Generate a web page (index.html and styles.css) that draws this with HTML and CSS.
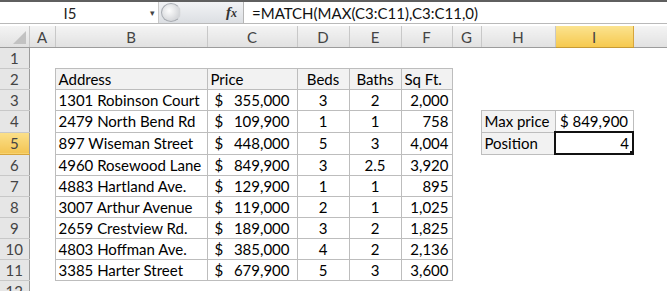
FILE: index.html
```html
<!DOCTYPE html>
<html lang="en">
<head>
    <meta charset="UTF-8">
    <title>MATCH max price</title>
    <link rel="stylesheet" href="styles.css">
</head>
<body>
    <div class="formula-bar">
        <div class="name-box">
            <span class="name">I5</span>
            <span class="drop">&#9662;</span>
        </div>
        <div class="splitter">
            <span class="knob"></span>
            <span class="fx"><i>f</i><i class="x">x</i></span>
        </div>
        <div class="formula">=MATCH(MAX(C3:C11),C3:C11,0)</div>
    </div>

    <table class="sheet">
        <colgroup>
            <col style="width:29px">
            <col style="width:26px">
            <col style="width:152px">
            <col style="width:90px">
            <col style="width:52px">
            <col style="width:52px">
            <col style="width:51px">
            <col style="width:29px">
            <col style="width:74px">
            <col style="width:78px">
            <col style="width:34px">
        </colgroup>
        <tr class="col-heads">
            <th class="corner"><span class="tri"></span></th>
            <th>A</th><th>B</th><th>C</th><th>D</th><th>E</th><th>F</th><th>G</th><th>H</th><th class="sel">I</th><th></th>
        </tr>
        <tr>
            <th class="rh">1</th>
            <td></td><td></td><td></td><td></td><td></td><td></td><td></td><td></td><td></td><td></td>
        </tr>
        <tr>
            <th class="rh">2</th>
            <td></td>
            <td class="t hd">Address</td>
            <td class="t hd">Price</td>
            <td class="t hd c">Beds</td>
            <td class="t hd c">Baths</td>
            <td class="t hd">Sq Ft.</td>
            <td></td><td></td><td></td><td></td>
        </tr>
        <tr>
            <th class="rh">3</th>
            <td></td>
            <td class="t">1301 Robinson Court</td>
            <td class="t money"><span>$</span><span>355,000</span></td>
            <td class="t c">3</td><td class="t c">2</td><td class="t r">2,000</td>
            <td></td><td></td><td></td><td></td>
        </tr>
        <tr>
            <th class="rh">4</th>
            <td></td>
            <td class="t">2479 North Bend Rd</td>
            <td class="t money"><span>$</span><span>109,900</span></td>
            <td class="t c">1</td><td class="t c">1</td><td class="t r">758</td>
            <td></td>
            <td class="t hd">Max price</td>
            <td class="t c">$ 849,900</td>
            <td></td>
        </tr>
        <tr>
            <th class="rh sel">5</th>
            <td></td>
            <td class="t">897 Wiseman Street</td>
            <td class="t money"><span>$</span><span>448,000</span></td>
            <td class="t c">5</td><td class="t c">3</td><td class="t r">4,004</td>
            <td></td>
            <td class="t hd">Position</td>
            <td class="active r">4<span class="handle"></span></td>
            <td></td>
        </tr>
        <tr>
            <th class="rh">6</th>
            <td></td>
            <td class="t">4960 Rosewood Lane</td>
            <td class="t money"><span>$</span><span>849,900</span></td>
            <td class="t c">3</td><td class="t c">2.5</td><td class="t r">3,920</td>
            <td></td><td></td><td></td><td></td>
        </tr>
        <tr>
            <th class="rh">7</th>
            <td></td>
            <td class="t">4883 Hartland Ave.</td>
            <td class="t money"><span>$</span><span>129,900</span></td>
            <td class="t c">1</td><td class="t c">1</td><td class="t r">895</td>
            <td></td><td></td><td></td><td></td>
        </tr>
        <tr>
            <th class="rh">8</th>
            <td></td>
            <td class="t">3007 Arthur Avenue</td>
            <td class="t money"><span>$</span><span>119,000</span></td>
            <td class="t c">2</td><td class="t c">1</td><td class="t r">1,025</td>
            <td></td><td></td><td></td><td></td>
        </tr>
        <tr>
            <th class="rh">9</th>
            <td></td>
            <td class="t">2659 Crestview Rd.</td>
            <td class="t money"><span>$</span><span>189,000</span></td>
            <td class="t c">3</td><td class="t c">2</td><td class="t r">1,825</td>
            <td></td><td></td><td></td><td></td>
        </tr>
        <tr>
            <th class="rh">10</th>
            <td></td>
            <td class="t">4803 Hoffman Ave.</td>
            <td class="t money"><span>$</span><span>385,000</span></td>
            <td class="t c">4</td><td class="t c">2</td><td class="t r">2,136</td>
            <td></td><td></td><td></td><td></td>
        </tr>
        <tr>
            <th class="rh">11</th>
            <td></td>
            <td class="t">3385 Harter Street</td>
            <td class="t money"><span>$</span><span>679,900</span></td>
            <td class="t c">5</td><td class="t c">3</td><td class="t r">3,600</td>
            <td></td><td></td><td></td><td></td>
        </tr>
        <tr>
            <th class="rh">12</th>
            <td></td><td></td><td></td><td></td><td></td><td></td><td></td><td></td><td></td><td></td>
        </tr>
    </table>
</body>
</html>
```

FILE: styles.css
```css
body {
    margin: 0;
    font-family: Lato, "Liberation Sans", sans-serif;
    font-size: 15px;
    color: #000;
    background: #fff;
    overflow: hidden;
}
.formula-bar {
    display: flex;
    height: 21px;
    border-top: 2px solid #5f5f5f;
    border-bottom: 1px solid #b9b9b9;
    background: #fff;
}
.name-box {
    width: 158px;
    display: flex;
    align-items: center;
    position: relative;
}
.name {
    width: 140px;
    text-align: center;
    color: #222;
}
.drop {
    font-size: 9px;
    color: #444;
    margin-left: 10px;
}
.splitter {
    width: 86px;
    display: flex;
    align-items: center;
    justify-content: space-between;
    background: linear-gradient(#f2f3f5, #dcdfe3);
    border-left: 1px solid #c9c9c9;
    border-right: 1px solid #b5b5b5;
    box-sizing: border-box;
    padding-right: 6px;
}
.knob {
    width: 18px;
    height: 17px;
    margin-left: 2px;
    border-radius: 50%;
    border: 1px solid #a9adb3;
    border-right-color: transparent;
    background: radial-gradient(circle at 40% 40%, #fdfdfd, #d4d6d9 70%);
}
.fx {
    font-family: "Liberation Serif", serif;
    font-size: 15px;
    font-weight: bold;
    color: #333;
}
.fx .x {
    font-size: 12px;
}
.formula {
    padding-left: 8px;
    display: flex;
    align-items: center;
    color: #111;
}
.sheet {
    table-layout: fixed;
    border-collapse: collapse;
    width: 667px;
    margin-top: 2px;
}
.sheet td,
.sheet th {
    height: 20px;
    padding: 0 3px;
    white-space: nowrap;
    overflow: hidden;
    line-height: 18px;
}
.col-heads th {
    height: 21px;
    font-weight: normal;
    color: #444;
    background: linear-gradient(#f4f4f4, #e1e1e1);
    border-right: 1px solid #c8c8c8;
    border-bottom: 1px solid #9c9c9c;
    text-align: center;
}
.col-heads th.sel {
    background: linear-gradient(#fbe38f, #f6c94f);
    border-right-color: #d7a53c;
    border-bottom-color: #c69a35;
}
.corner {
    position: relative;
}
.tri {
    position: absolute;
    right: 3px;
    bottom: 3px;
    width: 0;
    height: 0;
    border-left: 13px solid transparent;
    border-bottom: 13px solid #c2c2c2;
}
.rh {
    font-weight: normal;
    color: #444;
    background: #e6e6e6;
    border-right: 1px solid #9c9c9c;
    border-bottom: 1px solid #c8c8c8;
    text-align: center;
}
.rh.sel {
    background: linear-gradient(#fbe08a, #f3c453);
    border-bottom-color: #d7a53c;
}
.t {
    border: 1px solid #bdbdbd;
}
.hd {
    background: #f2f2f2;
}
.c {
    text-align: center;
}
.r {
    text-align: right;
}
.money span:first-child {
    float: left;
    padding-left: 4px;
}
.money span:last-child {
    float: right;
    padding-right: 4px;
}
.active {
    border: 2px solid #111;
    position: relative;
}
.handle {
    position: absolute;
    right: -4px;
    bottom: -4px;
    width: 5px;
    height: 5px;
    background: #111;
    border: 1px solid #fff;
}
```
